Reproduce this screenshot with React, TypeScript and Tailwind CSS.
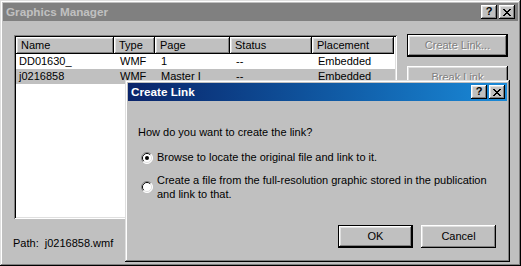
const raised =
  "shadow-[inset_-1px_-1px_0_#000000,inset_1px_1px_0_#ffffff,inset_-2px_-2px_0_#808080,inset_2px_2px_0_#dfdfdf]";
const frame =
  "shadow-[inset_-1px_-1px_0_#000000,inset_1px_1px_0_#dfdfdf,inset_-2px_-2px_0_#808080,inset_2px_2px_0_#ffffff]";
const sunken =
  "shadow-[inset_1px_1px_0_#808080,inset_-1px_-1px_0_#ffffff,inset_2px_2px_0_#000000,inset_-2px_-2px_0_#dfdfdf]";

function TitleButtons() {
  return (
    <div className="flex items-center gap-[2px]">
      <div className={`w-[16px] h-[14px] bg-[#c0c0c0] ${raised} flex items-center justify-center`}>
        <span className="text-[11px] font-bold leading-none text-black -mt-px">?</span>
      </div>
      <div className={`w-[16px] h-[14px] bg-[#c0c0c0] ${raised} flex items-center justify-center`}>
        <svg width="8" height="7" viewBox="0 0 8 7" shapeRendering="crispEdges">
          <path d="M0 0h2v1h-2zM6 0h2v1h-2zM1 1h2v1h-2zM5 1h2v1h-2zM2 2h4v1h-4zM3 3h2v1h-2zM2 4h4v1h-4zM1 5h2v1h-2zM5 5h2v1h-2zM0 6h2v1h-2zM6 6h2v1h-2z" fill="#000" />
        </svg>
      </div>
    </div>
  );
}

function Radio({ checked }: { checked?: boolean }) {
  return (
    <svg width="12" height="12" viewBox="0 0 12 12" className="shrink-0">
      <circle cx="6" cy="6" r="5.5" fill="#fff" />
      <path d="M2.1 9.9 A5.5 5.5 0 0 1 9.9 2.1" stroke="#808080" fill="none" />
      <path d="M9.9 2.1 A5.5 5.5 0 0 1 2.1 9.9" stroke="#fff" fill="none" />
      <path d="M2.8 9.2 A4.5 4.5 0 0 1 9.2 2.8" stroke="#000" fill="none" />
      <path d="M9.2 2.8 A4.5 4.5 0 0 1 2.8 9.2" stroke="#dfdfdf" fill="none" />
      <circle cx="6" cy="6" r="3.6" fill="#fff" />
      {checked && <circle cx="6" cy="6" r="2" fill="#000" />}
    </svg>
  );
}

function Button({ label, isDefault, disabled, className = "" }: { label: string; isDefault?: boolean; disabled?: boolean; className?: string }) {
  const text = disabled ? "text-[#808080] [text-shadow:1px_1px_0_#ffffff]" : "text-black";
  if (isDefault) {
    return (
      <div className={`border border-black bg-[#c0c0c0] ${className}`}>
        <div className={`w-full h-full ${raised} flex items-center justify-center ${text}`}>{label}</div>
      </div>
    );
  }
  return <div className={`bg-[#c0c0c0] ${raised} flex items-center justify-center ${text} ${className}`}>{label}</div>;
}

const cols = [
  { name: "Name", w: "w-[98px]" },
  { name: "Type", w: "w-[41px]" },
  { name: "Page", w: "w-[75px]" },
  { name: "Status", w: "w-[82px]" },
  { name: "Placement", w: "w-[82px]" },
];

const rows = [
  ["DD01630_", "WMF", "1", "--", "Embedded"],
  ["j0216858", "WMF", "Master I", "--", "Embedded"],
];

export default function App() {
  return (
    <div className="relative w-[521px] h-[266px] overflow-hidden bg-[#c0c0c0] text-[11px] text-black font-['Liberation_Sans',Arial,sans-serif]">
      {/* Graphics Manager window (inactive) */}
      <div className={`w-full h-full p-[3px] flex flex-col ${frame}`}>
        <div className="h-[18px] bg-[#808080] flex items-center justify-between pl-[3px] pr-[3px]">
          <span className="font-bold text-[11.7px] text-[#c0c0c0]">Graphics Manager</span>
          <TitleButtons />
        </div>

        <div className="flex-1 flex flex-col pl-[11px] pt-[13px]">
          <div className="flex">
            <div className={`mt-px w-[383px] h-[184px] bg-white p-[2px] ${sunken}`}>
              <div className="flex">
                {cols.map((c) => (
                  <div key={c.name} className={`${c.w} h-[17px] bg-[#c0c0c0] ${raised} flex items-center pl-[5px]`}>
                    {c.name}
                  </div>
                ))}
              </div>
              {rows.map((r, i) => (
                <div key={i} className={`flex h-[15px] items-center ${i === 1 ? "bg-[#c0c0c0]" : ""}`}>
                  {r.map((cell, j) => (
                    <div key={j} className={`${cols[j].w} shrink-0 ${j === 0 ? "pl-[3px]" : "pl-[6px]"}`}>
                      {cell}
                    </div>
                  ))}
                </div>
              ))}
            </div>

            <div className="ml-[10px] flex flex-col gap-[9px]">
              <Button label="Create Link..." isDefault disabled className="w-[101px] h-[23px]" />
              <Button label="Break Link" disabled className="w-[101px] h-[23px]" />
            </div>
          </div>

          <div className="mt-[16px] -ml-px">Path:&nbsp; j0216858.wmf</div>
        </div>
      </div>

      {/* Create Link dialog (active) */}
      <div className={`absolute left-[125px] top-[80px] w-[385px] h-[182px] bg-[#c0c0c0] p-[3px] flex flex-col ${frame}`}>
        <div className="h-[18px] bg-gradient-to-r from-[#0a246a] to-[#1a8ad8] flex items-center justify-between pl-[3px] pr-[2px]">
          <span className="font-bold text-[11.7px] text-white">Create Link</span>
          <TitleButtons />
        </div>

        <div className="flex-1 pl-[10px] pt-[25px] leading-[13px]">
          <div>How do you want to create the link?</div>
          <div className="mt-[12px] ml-[3px] flex items-center gap-[4px]">
            <Radio checked />
            <span>Browse to locate the original file and link to it.</span>
          </div>
          <div className="mt-[9px] ml-[3px] flex items-center gap-[4px] leading-[14px]">
            <Radio />
            <span>
              Create a file from the full-resolution graphic stored in the publication
              <br />
              and link to that.
            </span>
          </div>
        </div>

        <div className="flex justify-end gap-[8px] pr-[11px] pb-[11px]">
          <Button label="OK" isDefault className="w-[75px] h-[23px]" />
          <Button label="Cancel" className="w-[75px] h-[23px]" />
        </div>
      </div>
    </div>
  );
}
